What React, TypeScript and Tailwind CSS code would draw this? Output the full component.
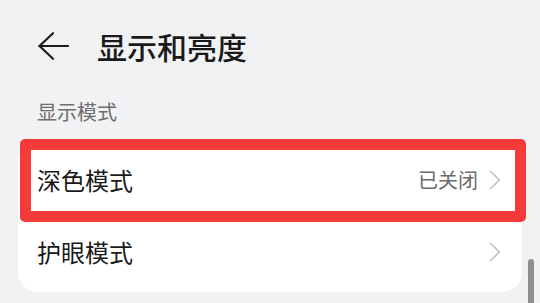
import React from "react";

function BackArrow() {
  return (
    <svg width="31" height="28" viewBox="0 0 31 28" fill="none">
      <path d="M1.5 14H30" stroke="#1c1c1c" strokeWidth="2.2" strokeLinecap="round" />
      <path d="M15 1.2L1.5 14L15 26.8" stroke="#1c1c1c" strokeWidth="2.2" strokeLinecap="round" strokeLinejoin="round" />
    </svg>
  );
}

function Chevron() {
  return (
    <svg width="12" height="20" viewBox="0 0 12 20" fill="none">
      <path d="M1.5 1.5L10.5 10L1.5 18.5" stroke="#c2c2c2" strokeWidth="1.7" strokeLinecap="round" strokeLinejoin="round" />
    </svg>
  );
}

export default function App() {
  return (
    <div
      className="relative w-[540px] h-[303px] overflow-hidden bg-[#f1f2f4]"
      style={{ fontFamily: '"Noto Sans CJK SC", "Noto Sans", sans-serif' }}
    >
      <div className="flex h-[92px] items-center pl-[38px]">
        <BackArrow />
        <div className="ml-[28px] text-[30px] font-medium leading-none text-[#1a1a1a]">显示和亮度</div>
      </div>
      <div className="mt-[6px] pl-[37px] text-[20px] leading-[28px] text-[#6e6e6e]">显示模式</div>
      <div className="mx-[18px] mt-[15px] w-[504px] rounded-[20px] bg-white pb-[7px]">
        <div className="flex h-[78px] items-center pl-[19px] pr-[21px]">
          <div className="flex-1 text-[24px] leading-none text-[#1a1a1a]">深色模式</div>
          <div className="mr-[11px] text-[20px] leading-none text-[#6b6b6b]">已关闭</div>
          <Chevron />
        </div>
        <div className="flex h-[66px] items-center pl-[19px] pr-[21px]">
          <div className="flex-1 text-[24px] leading-none text-[#1a1a1a]">护眼模式</div>
          <Chevron />
        </div>
      </div>
      <div className="absolute left-[20px] top-[139px] h-[83px] w-[506px] rounded-[5px] border-[11px] border-[#f53a3a]" />
      <div className="absolute left-[528px] top-[259px] h-[60px] w-[6px] rounded-full bg-[#8f8f8f]" />
    </div>
  );
}
